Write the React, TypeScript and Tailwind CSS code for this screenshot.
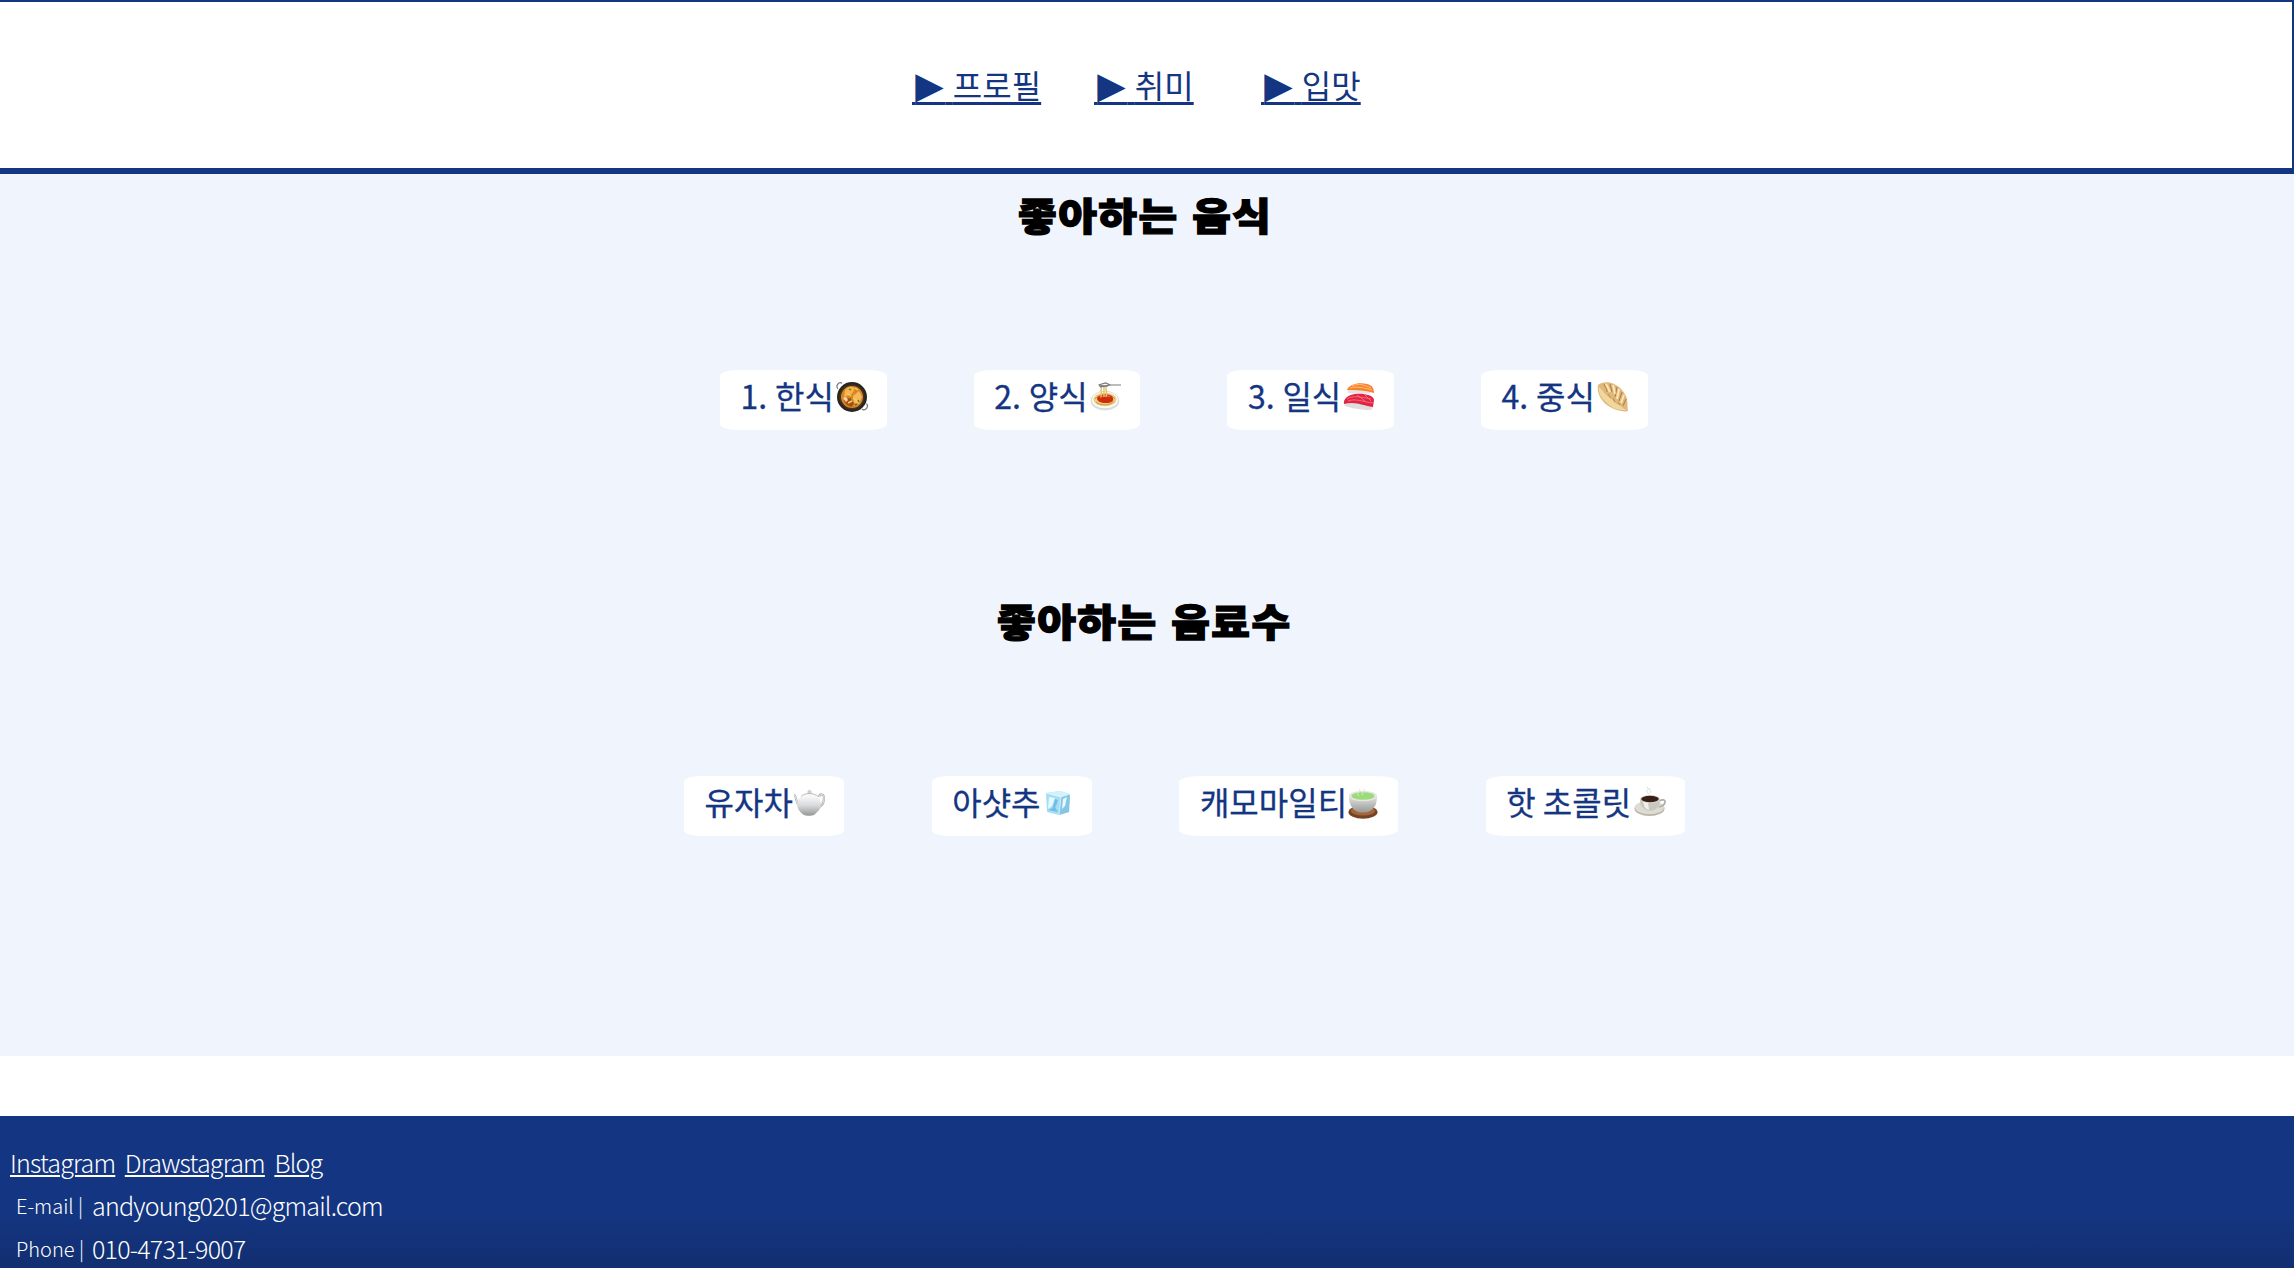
import type { ReactNode } from 'react';

function Icon({ children }: { children: ReactNode }) {
  return (
    <svg viewBox="0 0 32 32" className="mt-[11px] h-8 w-8 shrink-0" aria-hidden="true">
      {children}
    </svg>
  );
}

const Stew = () => (
  <Icon>
    <g fill="none" stroke="#77736e" strokeWidth="1.2">
      <path d="M1.8 7.8C-.4 4.5 2.5.5 6.2 2.2" />
      <path d="M30.5 22.5c2.4 3.2-.7 7.7-4.6 5.8" />
    </g>
    <circle cx="16" cy="16" r="15" fill="#292620" />
    <circle cx="16" cy="16" r="12.5" fill="#453421" />
    <circle cx="16" cy="16" r="11" fill="#dc8422" />
    <path d="M9 9c4-5 8-3 10-2l-3 6-8 3z" fill="#f5b34a" />
    <path d="M17 15l6-5 3 6-3 7-5-1z" fill="#f3b95b" />
    <path d="M8 19l5-2 5 5-2 4c-4-1-7-3-8-7z" fill="#a84d17" />
    <path d="M7 17l3-1 2 3-2 2z" fill="#f7dcae" />
    <path d="M11 12l4 3M19 7l3 2M17 17l4 3M12 22l4-2" stroke="#e9d16c" strokeWidth="1.5" />
    <path d="M13 8l2 1M22 19l1 2M19 24l2-1M14 17l1 2" stroke="#537029" strokeWidth="1.3" />
  </Icon>
);

const Pasta = () => (
  <Icon>
    <ellipse cx="16" cy="20" rx="14.3" ry="9.5" fill="#dcdee0" />
    <ellipse cx="16" cy="19" rx="13.6" ry="8.8" fill="#fafafa" stroke="#c9cbcd" strokeWidth=".6" />
    <ellipse cx="16" cy="18.5" rx="11.5" ry="6.8" fill="#eccf80" />
    <path d="M6 18c3-5 16-7 20 0M7 21c4 4 14 4 18-1" fill="none" stroke="#c89a45" />
    <path d="M8 17c2-4 14-5 16 0 1 3-2 5-7 5-6 0-9-2-9-5z" fill="#cf2b0d" />
    <path d="M11 17c2-3 7-3 10-1" stroke="#f36035" strokeWidth="1.5" fill="none" />
    <path d="M13 4c-2 4 0 8-1 12M15 4v12M17 4c-1 4 2 7 0 12" stroke="#e3c266" strokeWidth="1.4" fill="none" />
    <path d="M9.500 4l7-2 5 2h10.500M10 4.800l7-.2 5-.6M11 6l8-1" stroke="#777a7e" strokeWidth="1.2" fill="none" />
  </Icon>
);

const Sushi = () => (
  <Icon>
    <path d="M4 8l24 2-1 3c-8-1-16 0-22-1z" fill="#e5e6e2" />
    <path d="M4 9c2-6 12-8 20-6 5 1 7 4 7 9-9-3-18-3-27-3z" fill="#fa7f2e" />
    <path d="M9 5c7-3 13-1 19 2M7 7c7-2 15 0 22 2" stroke="#ffc178" fill="none" />
    <path d="M1 22c6-4 21 1 29 2 0 3-1 5-3 5-9 0-19-2-25-4z" fill="#dedfda" />
    <path d="M1 23c-1-5 4-9 11-10 8-1 19 1 19 6l-1 7c-10-1-17-6-29-3z" fill="#df2543" />
    <path d="M4 18c6-4 14-2 24 0M5 20c8-3 15 1 25 2M14 14l8 6M22 14l6 6" stroke="#ff7986" strokeWidth=".8" fill="none" />
  </Icon>
);

const Dumpling = () => (
  <Icon>
    <path d="M1 4C4 1 12 0 17 3c5 2 9 6 12 12 2 4 1 9 2 15-2 1-9 0-14-2C8 25-1 15 1 4z" fill="#dfb87b" />
    <path d="M2 6c4 3 5 7 10 10 4 3 6 7 10 8 2 1 4 4 8 5-7 1-14-1-19-6C5 18 1 13 2 6z" fill="#f1d69d" />
    <path d="M7 3c1 3 3 4 3 8M13 3l2 8M20 6l-2 10M25 11l-3 9M29 18l-3 7" stroke="#b07c42" strokeWidth="1" fill="none" />
    <path d="M9 3l4 8M16 4l2 9M22 8l-2 10M27 14l-3 8" stroke="#ffe9b9" strokeWidth="1.8" fill="none" />
    <path d="M11 13l3 4M16 17l2 4M21 21l2 3" stroke="#c4935a" strokeWidth="1.2" fill="none" />
  </Icon>
);

const Teapot = () => (
  <Icon>
    <defs>
      <linearGradient id="pot" x1="0" y1="0" x2="0" y2="1">
        <stop stopColor="#fcfcfc" />
        <stop offset=".5" stopColor="#d9dadc" />
        <stop offset="1" stopColor="#969694" />
      </linearGradient>
    </defs>
    <path d="M1 8c3 0 1 10 7 12M26 10c1-4 5-3 5 1 0 5-2 9-8 10" fill="none" stroke="#a9adb1" strokeWidth="2.2" />
    <path d="M1 8c3 0 1 10 7 12M26 10c1-4 5-3 5 1 0 5-2 9-8 10" fill="none" stroke="#f4f5f5" strokeWidth=".8" />
    <path d="M4 17c0-6 5-9 12-9s12 3 12 9-4 8-7 11c-2 1-8 1-10 0-3-2-7-6-7-11z" fill="url(#pot)" />
    <path d="M8 9.500c4-4 13-4 17 0" fill="#f7f7f7" stroke="#a7adb3" strokeWidth=".8" />
    <circle cx="16.5" cy="5" r="1.6" fill="#d8dadd" stroke="#a7adb3" strokeWidth=".6" />
  </Icon>
);

const Ice = () => (
  <Icon>
    <path d="M5 6L19 4l10 3-1 18-10 3-12-3z" fill="#a5ddf3" />
    <path d="M5 6L19 4l10 3-9 3z" fill="#d3f3fc" />
    <path d="M20 10l9-3-1 18-10 3z" fill="#86c6e4" />
    <path d="M8 10l6 1-3 8-4 3zM22 12l4-2-2 9-3 3z" fill="#e5faff" />
    <path d="M14 12l3 1-2 6-4 4zM7 23l7-3 3 5z" fill="#6dbfe7" />
    <path d="M5 6l15 4 9-3M20 10l-2 18" stroke="#e4f8fd" strokeWidth=".7" fill="none" />
  </Icon>
);

const Tea = () => (
  <Icon>
    <defs>
      <linearGradient id="cup" x1="0" y1="0" x2="0" y2="1">
        <stop stopColor="#f1f1ef" />
        <stop offset="1" stopColor="#989896" />
      </linearGradient>
    </defs>
    <ellipse cx="16" cy="25.2" rx="14.5" ry="6.5" fill="#754323" />
    <ellipse cx="16" cy="24" rx="12" ry="4.5" fill="#a3663c" />
    <path d="M2 9c0-4 28-4 28 0 0 8-2 12-7 15-3 2-11 2-14 0C4 21 2 16 2 9z" fill="url(#cup)" />
    <ellipse cx="16" cy="9" rx="14" ry="5.3" fill="#e5e5e1" />
    <ellipse cx="16" cy="9" rx="11.5" ry="3.8" fill="#9bdc78" />
    <path d="M12 9c-5-4 4-3 0-7M16 8c-3-3 4-3 1-6" stroke="#e0e3df" fill="none" />
  </Icon>
);

const Coffee = () => (
  <Icon>
    <ellipse cx="15.5" cy="21.5" rx="15" ry="7.5" fill="#b8b4aa" />
    <ellipse cx="15.5" cy="20.5" rx="14.5" ry="6.8" fill="#dedbd2" />
    <path d="M25 14c8-4 8 4 0 6" stroke="#b0aea8" strokeWidth="1.8" fill="none" />
    <path d="M6 12c0-4 20-4 20 0 0 7-2 9-6 11-2 1-6 1-8 0-4-2-6-5-6-11z" fill="#c9c7bf" />
    <path d="M9 15l2 6 4 2-1-8z" fill="#f1efea" />
    <ellipse cx="16" cy="12" rx="10" ry="4" fill="#e4e1db" />
    <ellipse cx="16" cy="12" rx="8.8" ry="3.2" fill="#372017" />
    <path d="M15 7c-6-4 2-3-2-7M16 6c3-2-2-3 0-5" stroke="#d9dadb" fill="none" />
  </Icon>
);

function Pill({ className, text, children }: { className: string; text: string; children: ReactNode }) {
  return (
    <li className={`flex h-[60px] justify-between whitespace-pre rounded-[10%] bg-white pr-[19px] pl-[20.5px] leading-[51px] ${className}`}>
      <span>{text}</span>
      {children}
    </li>
  );
}

function NavLink({ className, text }: { className: string; text: string }) {
  return (
    <a href="#" className={`block whitespace-pre ${className}`}>
      <span className="underline decoration-[3px] underline-offset-[3.5px] [text-decoration-skip-ink:none]">
        <span className="font-['DejaVu_Sans'] text-[10px]"> </span>
        <span className="font-['DejaVu_Sans'] text-[37px] leading-none tracking-[2px]">▶</span>
        <span> {text}</span>
      </span>
    </a>
  );
}

function Title({ className, text }: { className: string; text: string }) {
  return (
    <div className={`h-[196px] pt-[10px] ${className}`}>
      <h1 className="origin-[0_50%] scale-y-[0.9] text-[42px] leading-[60px] font-black tracking-[1.5px] whitespace-nowrap text-black [word-spacing:2.5px] [-webkit-text-stroke:1.5px_black]">
        {text}
      </h1>
    </div>
  );
}

export default function App() {
  return (
    <div className="flex h-[1268px] flex-col overflow-hidden bg-white font-['Noto_Sans_CJK_KR',sans-serif] text-[32px] text-[#143682]">
      <header className="h-[174px] shrink-0 border-t-2 border-r-2 border-b-[6px] border-[#143682]">
        <nav className="flex pt-[58px] pl-[912px] leading-[48px]">
          <NavLink className="w-[182px]" text="프로필" />
          <NavLink className="w-[167px]" text="취미" />
          <NavLink className="w-[100px]" text="입맛" />
        </nav>
      </header>

      <main className="h-[882px] shrink-0 bg-[#eff4fd]">
        <section className="h-[406px]">
          <Title className="pl-[1018px]" text="좋아하는 음식" />
          <ul className="flex gap-[87px] pl-[720px] [word-spacing:0.7px] [-webkit-text-stroke:0.3px_#143682]">
            <Pill className="w-[166.7px]" text="1. 한식"><Stew /></Pill>
            <Pill className="w-[166.7px]" text="2. 양식"><Pasta /></Pill>
            <Pill className="w-[166.7px]" text="3. 일식"><Sushi /></Pill>
            <Pill className="w-[166.7px]" text="4. 중식"><Dumpling /></Pill>
          </ul>
        </section>
        <section>
          <Title className="pl-[997px]" text="좋아하는 음료수" />
          <ul className="flex gap-[87.3px] pl-[684px] [-webkit-text-stroke:0.3px_#143682]">
            <Pill className="w-[160.4px]" text="유자차"><Teapot /></Pill>
            <Pill className="w-[160.4px]" text="아샷추"><Ice /></Pill>
            <Pill className="w-[219px]" text="캐모마일티"><Tea /></Pill>
            <Pill className="w-[199px]" text="핫 초콜릿"><Coffee /></Pill>
          </ul>
        </section>
      </main>

      <footer className="mt-[60px] flex-1 bg-linear-to-b from-[#143682] from-60% to-[#122e70] pt-[25px] pl-[10px] text-[25px] leading-[43px] font-light tracking-[-0.8px] text-white">
        <div className="flex gap-[9.500px]">
          <a href="#" className="underline decoration-2 underline-offset-[2px]">Instagram</a>
          <a href="#" className="underline decoration-2 underline-offset-[2px]">Drawstagram</a>
          <a href="#" className="underline decoration-2 underline-offset-[2px]">Blog</a>
        </div>
        <p className="flex pl-[6px]">
          <span className="w-[76px] text-[20px] tracking-normal">E-mail |</span>andyoung0201@gmail.com
        </p>
        <p className="flex pl-[6px]">
          <span className="w-[76px] text-[20px] tracking-normal">Phone |</span>010-4731-9007
        </p>
      </footer>
    </div>
  );
}
